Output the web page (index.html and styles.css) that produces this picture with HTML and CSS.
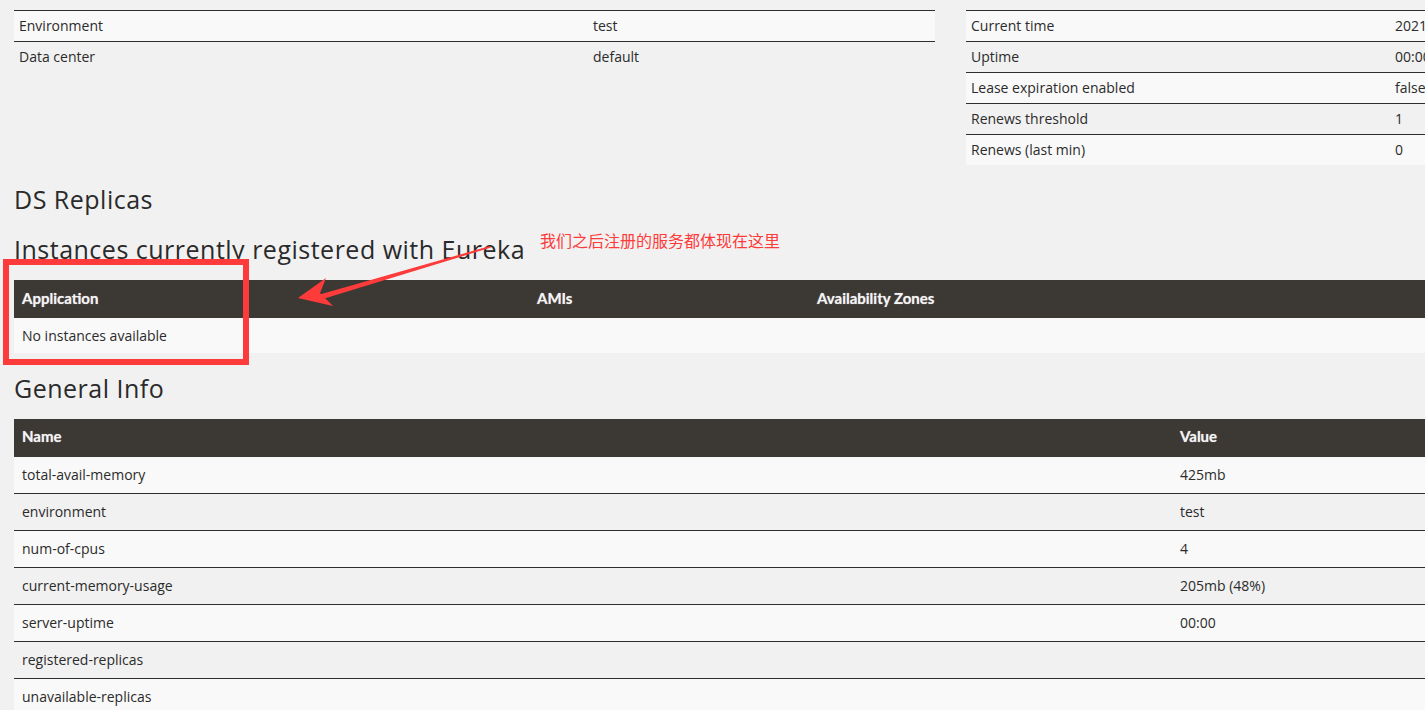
FILE: index.html
```html
<!DOCTYPE html>
<html lang="en">
<head>
<meta charset="utf-8">
<title>Eureka</title>
<link rel="stylesheet" href="styles.css">
</head>
<body>
<div class="page">
  <div class="top-row">
    <table class="kv kv-left">
      <tr><td class="k">Environment</td><td>test</td></tr>
      <tr><td class="k">Data center</td><td>default</td></tr>
    </table>
    <table class="kv kv-right">
      <tr><td class="k">Current time</td><td>2021-01-01T00:00:00 +0800</td></tr>
      <tr><td class="k">Uptime</td><td>00:00</td></tr>
      <tr><td class="k">Lease expiration enabled</td><td>false</td></tr>
      <tr><td class="k">Renews threshold</td><td>1</td></tr>
      <tr><td class="k">Renews (last min)</td><td>0</td></tr>
    </table>
  </div>

  <h2 class="title first">DS Replicas</h2>
  <h2 class="title">Instances currently registered with Eureka</h2>
  <table class="grid instances">
    <thead>
      <tr><th class="c-app">Application</th><th class="c-ami">AMIs</th><th class="c-zone">Availability Zones</th></tr>
    </thead>
    <tbody>
      <tr><td colspan="3">No instances available</td></tr>
    </tbody>
  </table>

  <h2 class="title">General Info</h2>
  <table class="grid info">
    <thead>
      <tr><th class="c-name">Name</th><th>Value</th></tr>
    </thead>
    <tbody>
      <tr><td>total-avail-memory</td><td>425mb</td></tr>
      <tr><td>environment</td><td>test</td></tr>
      <tr><td>num-of-cpus</td><td>4</td></tr>
      <tr><td>current-memory-usage</td><td>205mb (48%)</td></tr>
      <tr><td>server-uptime</td><td>00:00</td></tr>
      <tr><td>registered-replicas</td><td></td></tr>
      <tr><td>unavailable-replicas</td><td></td></tr>
      <tr><td>available-replicas</td><td></td></tr>
    </tbody>
  </table>
</div>

<div class="note">我们之后注册的服务都体现在这里</div>
<div class="mark-box"></div>
<svg class="arrow" width="220" height="80" viewBox="0 0 220 80" aria-hidden="true">
  <path d="M200 6 L28 55 L29.5 60 L201 7.5 Z" fill="#fe3b3b"/>
  <path d="M8 58 L36 38 L30 53 L43 66 Z" fill="#fe3b3b"/>
</svg>
</body>
</html>
```
FILE: styles.css
```css
html, body {
  margin: 0;
  padding: 0;
  background: #f1f1f1;
  overflow: hidden;
}
body {
  font-family: "Open Sans", "Noto Sans", sans-serif;
  font-size: 14px;
  color: #2b2b2b;
  position: relative;
}
.page {
  width: 1910px;
  padding: 10px 0 0 14px;
}
.top-row {
  display: flex;
  gap: 31px;
  align-items: flex-start;
}
table {
  border-collapse: collapse;
  border-spacing: 0;
}
.kv {
  width: 921px;
  border-top: 1px solid #2e2e2e;
}
.kv td {
  height: 30px;
  padding: 0 5px;
  line-height: 20px;
  vertical-align: middle;
}
.kv tr + tr td {
  border-top: 1px solid #2e2e2e;
}
.kv tr:nth-child(odd) td {
  background: #f9f9f9;
}
.kv-left .k { width: 564px; }
.kv-right .k { width: 414px; }

.title {
  font-family: "Open Sans", "Lato", sans-serif;
  font-weight: 500;
  font-size: 25px;
  line-height: 30px;
  letter-spacing: 0.5px;
  color: #2a2a2a;
  margin: 20px 0 16px;
}
.title.first {
  margin-top: 19px;
}
.grid {
  width: 1890px;
}
.grid th {
  background: #3c3834;
  color: #f4f4f4;
  font-family: "Lato", "Open Sans", sans-serif;
  font-weight: 700;
  font-size: 15px;
  line-height: 20px;
  text-align: left;
  height: 35px;
  padding: 0 8px 3px;
  text-shadow: 0 0 1px rgba(255,255,255,0.6);
}
.grid td {
  padding: 0 8px;
  line-height: 20px;
  vertical-align: middle;
}
.instances td {
  height: 35px;
  background: #f9f9f9;
}
.c-app { width: 499px; }
.c-ami { width: 264px; }
.info th { height: 34px; }
.info td {
  height: 36px;
  border-top: 1px solid #2e2e2e;
}
.info tbody tr:first-child td {
  border-top-color: transparent;
}
.info tbody tr:nth-child(odd) td {
  background: #f9f9f9;
}
.c-name { width: 1142px; }

.note {
  position: absolute;
  left: 540px;
  top: 229px;
  font-family: "Noto Sans CJK SC", sans-serif;
  font-size: 16px;
  line-height: 22px;
  color: #fe3b3b;
}
.mark-box {
  position: absolute;
  left: 3px;
  top: 259px;
  width: 234px;
  height: 94px;
  border: 6px solid #fe3b3b;
}
.arrow {
  position: absolute;
  left: 290px;
  top: 240px;
}
```
